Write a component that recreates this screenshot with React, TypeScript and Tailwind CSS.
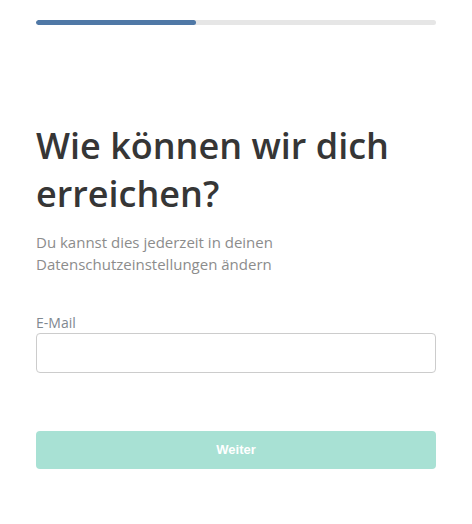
// Kontakt-Schritt im Onboarding: Fortschritt, Titel, E-Mail-Feld und Weiter-Button
export default function App() {
  return (
    <div className="min-h-[524px] w-[472px] bg-white px-9 pt-5 font-['Open_Sans','Noto_Sans',sans-serif]">
      {/* Fortschrittsbalken — Schritt 2 von 5 */}
      <div className="h-[5px] w-full overflow-hidden rounded-full bg-[#e6e6e6]">
        <div className="h-full w-2/5 rounded-full bg-[#4f78a6]" />
      </div>

      <h1 className="mt-[97px] text-[36px] font-semibold leading-[48px] text-[#363636]">
        Wie können wir dich erreichen?
      </h1>
      <p className="mt-[13px] text-[15px] leading-[22px] text-[#8c8c8c]">
        Du kannst dies jederzeit in deinen Datenschutzeinstellungen ändern
      </p>

      <label className="mt-[39px] block">
        <span className="block text-[14px] leading-[18px] text-[#808890]">E-Mail</span>
        <input
          type="email"
          className="mt-px block h-[40px] w-full rounded-[4px] border border-[#cccccc] px-3 text-[15px] outline-none"
        />
      </label>

      <button
        type="button"
        disabled
        className="mt-[58px] block h-[38px] w-full rounded-[4px] bg-[#a8e1d4] font-['Liberation_Sans',Arial,sans-serif] text-[13px] font-bold text-white"
      >
        Weiter
      </button>
    </div>
  );
}
